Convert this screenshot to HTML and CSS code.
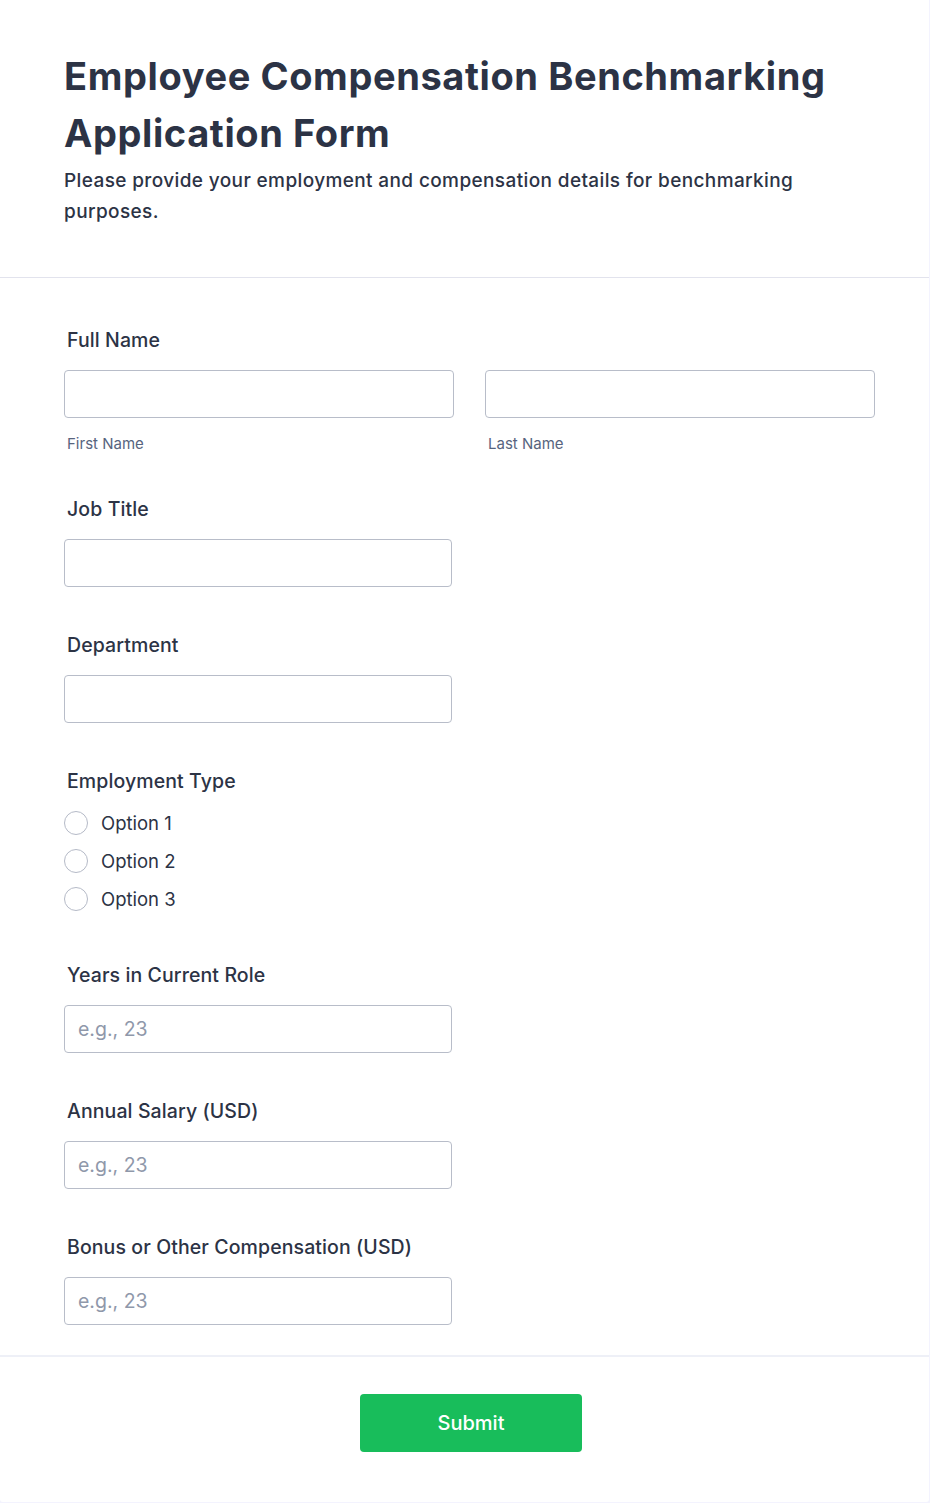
FILE: index.html
```html
<!DOCTYPE html>
<html lang="en">
<head>
<meta charset="utf-8">
<title>Employee Compensation Benchmarking Application Form</title>
<link rel="stylesheet" href="styles.css">
</head>
<body>
<div class="card">
  <header class="form-header">
    <h1 class="form-title">Employee Compensation Benchmarking Application Form</h1>
    <p class="form-desc">Please provide your employment and compensation details for benchmarking purposes.</p>
  </header>
  <form class="form-body">
    <div class="field">
      <label class="field-label">Full Name</label>
      <div class="name-row">
        <div class="name-col">
          <input class="text-input" type="text">
          <span class="sublabel">First Name</span>
        </div>
        <div class="name-col">
          <input class="text-input" type="text">
          <span class="sublabel">Last Name</span>
        </div>
      </div>
    </div>
    <div class="field">
      <label class="field-label">Job Title</label>
      <input class="text-input single" type="text">
    </div>
    <div class="field">
      <label class="field-label">Department</label>
      <input class="text-input single" type="text">
    </div>
    <div class="field field-radio">
      <label class="field-label">Employment Type</label>
      <div class="radio-list">
        <label class="radio-row"><span class="radio-circle"></span><span class="radio-text">Option 1</span></label>
        <label class="radio-row"><span class="radio-circle"></span><span class="radio-text">Option 2</span></label>
        <label class="radio-row"><span class="radio-circle"></span><span class="radio-text">Option 3</span></label>
      </div>
    </div>
    <div class="field">
      <label class="field-label">Years in Current Role</label>
      <input class="text-input single" type="text" placeholder="e.g., 23">
    </div>
    <div class="field">
      <label class="field-label">Annual Salary (USD)</label>
      <input class="text-input single" type="text" placeholder="e.g., 23">
    </div>
    <div class="field">
      <label class="field-label">Bonus or Other Compensation (USD)</label>
      <input class="text-input single" type="text" placeholder="e.g., 23">
    </div>
  </form>
  <footer class="form-footer">
    <button class="submit-btn" type="button">Submit</button>
  </footer>
</div>
</body>
</html>
```

FILE: styles.css
```css
* { box-sizing: border-box; }

html, body {
  margin: 0;
  padding: 0;
}

body {
  background: #f3f3fe;
  font-family: Inter, "Noto Sans", "Liberation Sans", sans-serif;
  color: #2c3345;
}

.card {
  width: 929px;
  min-height: 1502px;
  background: #ffffff;
  border-radius: 0 0 3px 3px;
}

.form-header {
  padding: 48px 55px 50px 64px;
  border-bottom: 1px solid #e2e3ed;
}

.form-title {
  margin: 0;
  font-size: 38px;
  line-height: 57px;
  font-weight: 700;
  letter-spacing: 0.6px;
  color: #2c3345;
}

.form-desc {
  margin: 3px 0 0;
  font-size: 19px;
  line-height: 31px;
  font-weight: 500;
  letter-spacing: 0.38px;
  color: #2c3345;
}

.form-body {
  display: flex;
  flex-direction: column;
  gap: 44px;
  padding: 48px 55px 30px 64px;
  border-bottom: 2px solid #eef0f7;
}

.field {
  display: flex;
  flex-direction: column;
}

.field-label {
  font-size: 19.5px;
  line-height: 28px;
  font-weight: 500;
  letter-spacing: 0.1px;
  padding-left: 3px;
  margin-bottom: 16px;
  color: #2c3345;
}

.name-row {
  display: grid;
  grid-template-columns: 390px 390px;
  column-gap: 31px;
}

.name-col {
  display: flex;
  flex-direction: column;
}

.text-input {
  display: block;
  width: 100%;
  height: 48px;
  border: 1px solid #b8bdc9;
  border-radius: 4px;
  background: #ffffff;
  padding: 0 13px;
  font-family: inherit;
  font-size: 19.5px;
  color: #2c3345;
  outline: none;
}

.text-input.single {
  width: 388px;
}

.text-input::placeholder {
  color: #8f98aa;
}

.sublabel {
  margin-top: 18px;
  padding-left: 3px;
  font-size: 15px;
  line-height: 15px;
  color: #57647e;
}

.field-radio .field-label {
  margin-bottom: 9px;
}

.radio-list {
  display: flex;
  flex-direction: column;
  margin-bottom: -1px;
}

.radio-row {
  display: flex;
  align-items: center;
  height: 38px;
  gap: 13px;
}

.radio-circle {
  width: 24px;
  height: 24px;
  border: 1px solid #b5bac7;
  border-radius: 50%;
  background: #ffffff;
  flex: none;
}

.radio-text {
  font-size: 18.5px;
  line-height: 24px;
  color: #2c3345;
}

.form-footer {
  display: flex;
  justify-content: center;
  padding: 37px 0 50px 13px;
}

.submit-btn {
  width: 222px;
  height: 58px;
  border: none;
  border-radius: 4px;
  background: #18bd5b;
  color: #ffffff;
  font-family: inherit;
  font-size: 20px;
  font-weight: 500;
}
```
